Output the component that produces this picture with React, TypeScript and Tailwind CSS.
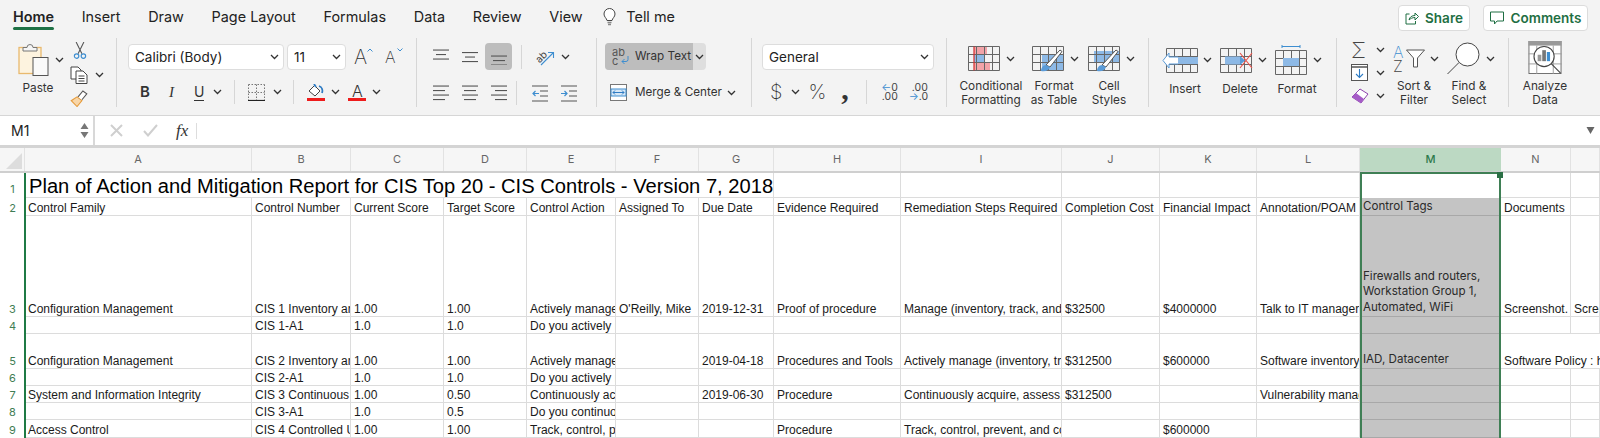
import React from "react";

// chevron used by every ribbon dropdown
const Chev = ({ className = "" }: { className?: string }) => (
  <svg width="9" height="6" viewBox="0 0 9 6" className={"shrink-0 " + className}>
    <path d="M1 1l3.5 3.5L8 1" fill="none" stroke="#333" strokeWidth="1.3" />
  </svg>
);

const Label = ({ children, className = "" }: { children: React.ReactNode; className?: string }) => (
  <div className={"text-center text-[11.8px] leading-[13.5px] text-[#333] " + className}>{children}</div>
);

const tabs = ["Insert", "Draw", "Page Layout", "Formulas", "Data", "Review", "View"];

const TopBar = () => (
  <div className="flex h-[38px] items-start justify-between">
    <div className="flex items-center gap-[27.75px] pl-[13px] pt-[7px] text-[14.4px] leading-[20px] text-[#222]">
      <div className="relative font-semibold">
        Home
        <div className="absolute left-0 right-0 top-[20px] h-[3px] rounded-sm bg-[#1e7145]"></div>
      </div>
      {tabs.map((t) => (
        <div key={t}>{t}</div>
      ))}
      <div className="-ml-[7px] flex items-center gap-[10px]">
        <svg width="13" height="18" viewBox="0 0 13 18">
          <path d="M4 12.5C3.5 10 1 9 1 6a5.5 5.5 0 0 1 11 0c0 3-2.5 4-3 6.5z" fill="#fff" stroke="#444" strokeWidth="1" />
          <path d="M4.5 14.5h4M5 16.5h3" stroke="#888" strokeWidth="1.4" />
        </svg>
        <span>Tell me</span>
      </div>
    </div>
    <div className="flex gap-[13px] pr-[12px] pt-[5px] text-[13.5px] font-semibold text-[#1f6f43]">
      <div className="flex h-[26px] w-[72px] items-center justify-center gap-[6px] rounded-[4px] border border-[#dcdcdc] bg-white">
        <svg width="14" height="14" viewBox="0 0 14 14" fill="none" stroke="#1f6f43" strokeWidth="1">
          <path d="M4.5 3H1v10h9.5v-3" />
          <path d="M4 9c.5-3 3-4.5 6-4.5V2l3.5 3.5L10 9V6.5C7.5 6.5 5.5 7.5 4 9z" />
        </svg>
        Share
      </div>
      <div className="flex h-[26px] w-[105px] items-center justify-center gap-[7px] rounded-[4px] border border-[#dcdcdc] bg-white">
        <svg width="14" height="14" viewBox="0 0 14 14" fill="none" stroke="#1f6f43" strokeWidth="1">
          <path d="M.5 1h13v9H7l-2.5 3v-3H.5z" />
        </svg>
        Comments
      </div>
    </div>
  </div>
);

const PasteIcon = () => (
  <svg width="31" height="33" viewBox="0 0 31 33" className="shrink-0">
    <rect x="1" y="4.5" width="22" height="26" fill="#fdf3df" stroke="#e9b96e" strokeWidth="1.3" />
    <path d="M5 8V4.5h4a3 3 0 0 1 6 0h4V8z" fill="#f5f5f5" stroke="#777" strokeWidth="1" />
    <rect x="15" y="14.5" width="15" height="18" fill="#fafafa" stroke="#555" strokeWidth="1" />
  </svg>
);

const ClipTools = () => (
  <div className="ml-[4px] flex w-[40px] flex-col pt-[4px]">
    <svg width="14" height="18" viewBox="0 0 14 18" className="ml-[3px]">
      <path d="M3 0l6 12M11 0L5 12" stroke="#555" strokeWidth="1.1" />
      <circle cx="3.5" cy="14.5" r="2.3" fill="none" stroke="#3e8ed0" strokeWidth="1.2" />
      <circle cx="10.5" cy="14.5" r="2.3" fill="none" stroke="#3e8ed0" strokeWidth="1.2" />
    </svg>
    <div className="mt-[6px] flex items-center">
      <svg width="19" height="18" viewBox="0 0 19 18" fill="#fff" stroke="#444" strokeWidth="1">
        <path d="M1 1h7l3 3v9H1z" />
        <path d="M6 5h7l4 4v8.5H6zM8.5 10h6M8.5 12.5h6M8.5 15h6" />
      </svg>
      <Chev className="ml-[6px]" />
    </div>
    <svg width="19" height="18" viewBox="0 0 19 18" className="mt-[6px]">
      <path d="M1 11l6 6 5-6-5-4z" fill="#f8d6a8" stroke="#e59b3c" strokeWidth="1.1" />
      <path d="M8 7l5-6 4 3-5 6" fill="#fff" stroke="#555" strokeWidth="1.1" />
    </svg>
  </div>
);

const Sep = () => <div className="h-[24px] w-px shrink-0 bg-[#d6d6d6]"></div>;

const SelectBox = ({ text, className }: { text: string; className: string }) => (
  <div className={"flex h-[26px] items-center justify-between rounded-[4px] border border-[#dddddd] bg-white pl-[6px] pr-[4px] text-[13.5px] text-[#222] " + className}>
    <span>{text}</span>
    <Chev />
  </div>
);

const FontGroup = () => (
  <div className="flex h-[69px] w-[300px] shrink-0 flex-col border-r border-[#d6d6d6] pl-[11px] pt-[6px]">
    <div className="flex items-center">
      <SelectBox text="Calibri (Body)" className="w-[156px]" />
      <SelectBox text="11" className="ml-[3px] w-[59px]" />
      <div className="relative ml-[8px] w-[19px] text-[20px] font-extralight leading-[24px] text-[#333]">
        A
        <svg width="6" height="4" viewBox="0 0 6 4" className="absolute right-0 top-[3px]">
          <path d="M.5 3.5L3 1l2.5 2.5" fill="none" stroke="#3e8ed0" />
        </svg>
      </div>
      <div className="relative ml-[12px] w-[17px] text-[16px] font-extralight leading-[24px] text-[#333]">
        A
        <svg width="6" height="4" viewBox="0 0 6 4" className="absolute -right-[1px] top-[3px]">
          <path d="M.5.5L3 3 5.5.5" fill="none" stroke="#3e8ed0" />
        </svg>
      </div>
    </div>
    <div className="mt-[10px] flex items-center text-[#333]">
      <span className="ml-[12px] text-[15px] font-semibold leading-[20px]">B</span>
      <span className="ml-[19px] font-['Liberation_Serif',serif] text-[15px] italic leading-[20px]">I</span>
      <span className="ml-[20px] border-b border-[#333] text-[14px] leading-[16px]">U</span>
      <Chev className="ml-[9px]" />
      <div className="ml-[12px]"><Sep /></div>
      <svg width="17" height="17" viewBox="0 0 17 17" className="ml-[13px]">
        <path d="M.5.5h16M.5 8.5h16M.5.5v16M8.5.5v16M16.5.5v16" stroke="#777" strokeDasharray="1.5 1.5" fill="none" />
        <path d="M0 16.5h17" stroke="#222" strokeWidth="1.2" />
      </svg>
      <Chev className="ml-[8px]" />
      <div className="ml-[11px]"><Sep /></div>
      <div className="ml-[13px] flex w-[18px] flex-col items-center">
        <svg width="16" height="13" viewBox="0 0 16 13">
          <path d="M1 7l5.5-5.5L12 7l-5 5z" fill="#fff" stroke="#444" strokeWidth="1" />
          <path d="M6 0l2 3M11 2c3 1 4 4 3 7" fill="none" stroke="#2f7cc4" strokeWidth="1.8" />
        </svg>
        <div className="mt-[1px] h-[3px] w-[18px] bg-[#ee1c1c]"></div>
      </div>
      <Chev className="ml-[6px]" />
      <div className="ml-[8px] flex w-[18px] flex-col items-center">
        <span className="h-[13px] text-[16px] font-light leading-[14px]">A</span>
        <div className="mt-[1px] h-[3px] w-[18px] bg-[#ee1c1c]"></div>
      </div>
      <Chev className="ml-[6px]" />
    </div>
  </div>
);

// stacked alignment bars, 4.5px apart like the ribbon icons
const Lines = ({ widths, offset = 0, side = "center" }: { widths: number[]; offset?: number; side?: string }) => (
  <svg width="16" height="16" viewBox="0 0 16 16" className="shrink-0">
    {widths.map((w, i) => (
      <rect
        key={i}
        x={side === "left" ? 0 : side === "right" ? 16 - w : (16 - w) / 2}
        y={i * 4.5 + 0.5 + offset}
        width={w}
        height="1.1"
        fill="#555"
      />
    ))}
  </svg>
);

const AlignGroup = () => (
  <div className="flex h-[69px] w-[180px] shrink-0 flex-col border-r border-[#d6d6d6] pl-[16px] pt-[5px]">
    <div className="flex h-[27px] items-center">
      <Lines widths={[16, 10, 16]} />
      <div className="ml-[13px]"><Lines widths={[16, 10, 16]} offset={2.5} /></div>
      <div className="ml-[7px] flex h-[27px] w-[27px] items-center justify-center rounded-[4px] bg-[#bdbdbd]">
        <Lines widths={[16, 12, 16]} offset={6} />
      </div>
      <div className="ml-[9px]"><Sep /></div>
      <svg width="20" height="20" viewBox="0 0 20 20" className="ml-[13px]">
        <text x="0" y="11" fontSize="10" fill="#444" transform="rotate(-45 6 8) translate(-1 2)" fontFamily="Inter">ab</text>
        <path d="M6 18L18 6M13 5.5h5.5V11" stroke="#3e8ed0" strokeWidth="1.1" fill="none" />
      </svg>
      <Chev className="ml-[6px]" />
    </div>
    <div className="mt-[11px] flex items-center">
      <Lines widths={[16, 12, 16, 12]} side="left" />
      <div className="ml-[13px]"><Lines widths={[16, 12, 16, 12]} /></div>
      <div className="ml-[13px]"><Lines widths={[16, 12, 16, 12]} side="right" /></div>
      <div className="ml-[9px]"><Sep /></div>
      <svg width="17" height="17" viewBox="0 0 17 17" className="ml-[15px]">
        <path d="M0 1h16M8 6h8M8 11h8M0 16h16" stroke="#555" strokeWidth="1.1" />
        <path d="M7 8.5H1M3.5 6L1 8.5 3.5 11" stroke="#3e8ed0" fill="none" strokeWidth="1.2" />
      </svg>
      <svg width="17" height="17" viewBox="0 0 17 17" className="ml-[12px]">
        <path d="M0 1h16M8 6h8M8 11h8M0 16h16" stroke="#555" strokeWidth="1.1" />
        <path d="M0 8.5h6M3.5 6L6 8.5 3.5 11" stroke="#3e8ed0" fill="none" strokeWidth="1.2" />
      </svg>
    </div>
  </div>
);

const WrapGroup = () => (
  <div className="flex h-[69px] w-[155px] shrink-0 flex-col border-r border-[#d6d6d6] pl-[8px] pt-[5px] text-[11.7px] text-[#333]">
    <div className="flex h-[27px] w-[101px] overflow-hidden rounded-[4px] bg-[#dedede]">
      <div className="relative flex w-[88px] items-center whitespace-nowrap bg-[#bdbdbd] pl-[7px]">
        <span className="w-[17px] text-[11px] leading-[9px] text-[#555]">ab<br />c</span>
        <svg width="8" height="8" viewBox="0 0 8 8" className="-ml-[8px] mt-[6px]">
          <path d="M7 0v3.5a2 2 0 0 1-2 2H1M3.5 3L1 5.5 3.5 8" fill="none" stroke="#3e8ed0" />
        </svg>
        <span className="ml-[6px]">Wrap Text</span>
      </div>
      <Chev className="ml-[2px] self-center" />
    </div>
    <div className="mt-[14px] flex items-center pl-[5px]">
      <svg width="17" height="17" viewBox="0 0 17 17">
        <rect x=".5" y=".5" width="16" height="16" fill="#fff" stroke="#777" />
        <rect x="1" y="5" width="15" height="7" fill="#d6e7f6" stroke="#3e8ed0" />
        <path d="M3 8.5h11M5 6.5l-2 2 2 2M12 6.5l2 2-2 2" stroke="#2f7cc4" fill="none" />
      </svg>
      <span className="ml-[8px] whitespace-nowrap">Merge &amp; Center</span>
      <Chev className="ml-[5px]" />
    </div>
  </div>
);

const NumberGroup = () => (
  <div className="flex h-[69px] w-[195px] shrink-0 flex-col border-r border-[#d6d6d6] pl-[10px] pt-[6px] text-[#333]">
    <SelectBox text="General" className="w-[172px]" />
    <div className="mt-[10px] flex items-center">
      <span className="ml-[8px] text-[20px] font-extralight leading-[24px]">$</span>
      <Chev className="ml-[9px]" />
      <span className="ml-[8px] text-[20px] font-extralight leading-[24px]">%</span>
      <span className="ml-[15px] h-[24px] font-['Liberation_Serif',serif] text-[30px] font-bold leading-[18px]">,</span>
      <div className="ml-[17px]"><Sep /></div>
      <div className="ml-[12px] w-[19px] text-right text-[10.5px] leading-[9px] text-[#444]">
        <span className="text-[#3e8ed0]">←</span>0<br />.00
      </div>
      <div className="ml-[11px] w-[19px] text-right text-[10.5px] leading-[9px] text-[#444]">
        .00<br /><span className="text-[#3e8ed0]">→</span>.0
      </div>
    </div>
  </div>
);

const Brush = () => (
  <g>
    <path d="M14 19L28 4l2 1.5-12 15.5z" fill="#fff" stroke="#555" strokeWidth="1" />
    <path d="M9 25c0-3 2-6 5-6l4 2c-1 3-4 5-9 4z" fill="#5a9bd8" />
  </g>
);

const GridLines = () => (
  <path d="M.5.5h31v24H.5zM.5 8.5h31M.5 16.5h31M8.5.5v24M16.5.5v24M24.5.5v24" fill="none" stroke="#666" strokeWidth="1" />
);

// icon sits where iconClass puts it, the caption is centred under the whole column
const BigButton = ({ icon, lines, w, iconClass }: { icon: React.ReactNode; lines: string[]; w: string; iconClass: string }) => (
  <div className={"flex shrink-0 flex-col items-center " + w}>
    <div className={"mb-[1px] flex h-[44px] w-full items-center " + iconClass}>{icon}</div>
    <Label className="whitespace-nowrap">
      {lines.map((l) => (
        <div key={l}>{l}</div>
      ))}
    </Label>
  </div>
);

const StylesGroup = () => (
  <div className="flex h-[69px] w-[202px] shrink-0 border-r border-[#d6d6d6] pl-[12px]">
    <BigButton
      w="w-[64px]"
      iconClass="pl-[9px]"
      lines={["Conditional", "Formatting"]}
      icon={
        <>
          <svg width="32" height="25" viewBox="0 0 32 25" className="shrink-0">
            <rect x="6" y="0" width="13" height="8" fill="#f2a3a8" />
            <rect x="6" y="8" width="10" height="8" fill="#8db9e6" />
            <rect x="6" y="17" width="16" height="8" fill="#f2a3a8" />
            <GridLines />
            <path d="M6 .5v24" stroke="#d52b2b" strokeWidth="1.2" />
          </svg>
          <Chev className="ml-[6px]" />
        </>
      }
    />
    <BigButton
      w="w-[62px]"
      iconClass="pl-[9px]"
      lines={["Format", "as Table"]}
      icon={
        <>
          <svg width="34" height="27" viewBox="0 0 34 27" className="mt-[2px] shrink-0">
            <rect x="10" y="8" width="21" height="16" fill="#8db9e6" />
            <GridLines />
            <Brush />
          </svg>
          <Chev className="ml-[4px]" />
        </>
      }
    />
    <BigButton
      w="w-[48px]"
      iconClass="pl-[3px]"
      lines={["Cell", "Styles"]}
      icon={
        <>
          <svg width="34" height="27" viewBox="0 0 34 27" className="mt-[2px] shrink-0">
            <rect x="6" y="5" width="25" height="12" fill="#8db9e6" />
            <GridLines />
            <Brush />
          </svg>
          <Chev className="ml-[4px]" />
        </>
      }
    />
  </div>
);

const CellsGroup = () => (
  <div className="flex h-[69px] w-[188px] shrink-0 border-r border-[#d6d6d6] pl-[6px]">
    <BigButton
      w="w-[60px]"
      iconClass="pl-[7px]"
      lines={["Insert"]}
      icon={
        <>
          <svg width="38" height="25" viewBox="0 0 38 25" className="shrink-0">
            <g transform="translate(4 0)"><GridLines /></g>
            <rect x="12" y="9" width="24" height="7" fill="#8db9e6" />
            <path d="M16 9H7V5L1 12.5 7 20v-4h9" fill="#fff" stroke="#5a9bd8" strokeWidth="1" />
          </svg>
          <Chev className="ml-[3px]" />
        </>
      }
    />
    <BigButton
      w="w-[50px]"
      iconClass="pl-[5px]"
      lines={["Delete"]}
      icon={
        <>
          <svg width="33" height="25" viewBox="0 0 33 25" className="shrink-0">
            <GridLines />
            <rect x="5" y="8.5" width="15" height="8" fill="#8db9e6" />
            <path d="M20 8l5 4.5-5 4.5z" fill="#5a9bd8" />
            <path d="M20 5l12 15M32 5L20 20" stroke="#e8564f" strokeWidth="1.2" />
          </svg>
          <Chev className="ml-[5px]" />
        </>
      }
    />
    <BigButton
      w="w-[64px]"
      iconClass="pl-[10px]"
      lines={["Format"]}
      icon={
        <>
          <svg width="32" height="30" viewBox="0 0 32 30" className="shrink-0">
            <path d="M7 1.5h18M7 0v3M25 0v3" stroke="#3e8ed0" fill="none" />
            <g transform="translate(0 5)"><GridLines /></g>
            <rect x="8" y="13" width="16" height="8" fill="#8db9e6" />
          </svg>
          <Chev className="ml-[6px]" />
        </>
      }
    />
  </div>
);

const EditGroup = () => (
  <div className="flex h-[69px] w-[172px] shrink-0 border-r border-[#d6d6d6] pl-[14px]">
    <div className="flex w-[42px] flex-col text-[#444]">
      <div className="flex h-[24px] items-center">
        <span className="w-[19px] text-[22px] font-extralight leading-[22px]">Σ</span>
        <Chev className="ml-[6px]" />
      </div>
      <div className="flex h-[24px] items-center">
        <svg width="18" height="17" viewBox="0 0 18 17">
          <rect x=".5" y=".5" width="16" height="16" fill="#fff" stroke="#555" />
          <path d="M0 3h17" stroke="#555" strokeWidth="1.5" />
          <path d="M8.5 5v8M5 10l3.5 3.5L12 10" stroke="#2f7cc4" fill="none" strokeWidth="1.1" />
        </svg>
        <Chev className="ml-[7px]" />
      </div>
      <div className="flex h-[24px] items-center">
        <svg width="18" height="17" viewBox="0 0 18 17">
          <path d="M1 10l8-8 8 5-7 9z" fill="#fff" stroke="#8e44ad" />
          <path d="M1 10l4-4 8 6-3 4z" fill="#a55bc7" />
        </svg>
        <Chev className="ml-[7px]" />
      </div>
    </div>
    <BigButton
      w="w-[42px]"
      iconClass=""
      lines={["Sort &", "Filter"]}
      icon={
        <>
          <div className="flex w-[13px] shrink-0 flex-col text-[16px] font-extralight leading-[14px]">
            <span className="text-[#3e8ed0]">A</span>
            <span className="text-[#444]">Z</span>
          </div>
          <svg width="19" height="19" viewBox="0 0 19 19" className="shrink-0">
            <path d="M.5 1h18l-7 8v9h-4V9z" fill="#fff" stroke="#555" />
          </svg>
          <Chev className="ml-[5px]" />
        </>
      }
    />
    <BigButton
      w="w-[68px]"
      iconClass="pl-[12px]"
      lines={["Find &", "Select"]}
      icon={
        <>
          <svg width="33" height="33" viewBox="0 0 33 33" className="shrink-0">
            <circle cx="20.5" cy="12.5" r="11.5" fill="#fff" stroke="#444" />
            <path d="M12 20.5L.5 32" stroke="#444" />
          </svg>
          <Chev className="ml-[6px]" />
        </>
      }
    />
  </div>
);

const AnalyzeGroup = () => (
  <div className="flex h-[69px] w-[72px] shrink-0 flex-col items-center">
    <svg width="36" height="36" viewBox="0 0 36 36" className="mt-[3px]">
      <rect x=".5" y=".5" width="35" height="35" fill="#fff" stroke="#666" />
      <rect x="0" y="0" width="36" height="5" fill="#999" />
      <path d="M0 14h36M0 25h36M9 5v31M27 5v31" stroke="#999" strokeWidth="1" />
      <circle cx="17" cy="17" r="11" fill="#fff" stroke="#444" strokeWidth="1.2" />
      <rect x="10" y="15" width="4" height="7" fill="#999" />
      <rect x="15" y="10" width="4" height="12" fill="#777" />
      <rect x="20" y="12" width="3.5" height="10" fill="#3e8ed0" />
      <path d="M25 25l10 10" stroke="#444" strokeWidth="1.2" />
    </svg>
    <Label className="mt-[6px]">
      <div>Analyze</div>
      <div>Data</div>
    </Label>
  </div>
);

const Ribbon = () => (
  <div className="flex h-[78px] border-b border-[#d6d6d6]">
    <div className="flex h-[69px] w-[117px] shrink-0 border-r border-[#d6d6d6] pl-[18px]">
      <div className="flex w-[48px] shrink-0 flex-col">
        <div className="mt-[5px] flex items-center">
          <PasteIcon />
          <Chev className="ml-[6px]" />
        </div>
        <div className="mt-[5px] w-[40px] text-center text-[11.8px] leading-[14px] text-[#333]">Paste</div>
      </div>
      <ClipTools />
    </div>
    <FontGroup />
    <AlignGroup />
    <WrapGroup />
    <NumberGroup />
    <StylesGroup />
    <CellsGroup />
    <EditGroup />
    <AnalyzeGroup />
  </div>
);

const FormulaBar = () => (
  <div className="flex h-[32px] items-stretch border-b-[3px] border-[#d4d4d4] bg-white">
    <div className="flex w-[95px] items-center justify-between border-r-2 border-[#d8d8d8] pl-[11px] pr-[4px] text-[14px] text-[#222]">
      <span>M1</span>
      <svg width="9" height="17" viewBox="0 0 9 17">
        <path d="M4.5 1L8.5 7H.5zM4.5 16L.5 10h8z" fill="#777" />
      </svg>
    </div>
    <div className="flex flex-1 items-center pl-[15px]">
      <svg width="13" height="13" viewBox="0 0 13 13">
        <path d="M1 1l11 11M12 1L1 12" stroke="#cfcfcf" strokeWidth="2" />
      </svg>
      <svg width="15" height="13" viewBox="0 0 15 13" className="ml-[20px]">
        <path d="M1 7l4 4.5L14 1" fill="none" stroke="#cfcfcf" strokeWidth="2" />
      </svg>
      <span className="ml-[18px] font-['Liberation_Serif',serif] text-[17px] italic text-[#333]">fx</span>
      <div className="ml-[8px] h-[16px] w-px bg-[#dddddd]"></div>
      <div className="flex-1"></div>
      <svg width="9" height="7" viewBox="0 0 9 7" className="mr-[5px]">
        <path d="M.5 0h8L4.5 7z" fill="#666" />
      </svg>
    </div>
  </div>
);

const columns = ["A", "B", "C", "D", "E", "F", "G", "H", "I", "J", "K", "L", "M", "N", ""];
const cols = "grid grid-cols-[25px_227px_99px_93px_83px_89px_83px_75px_127px_161px_98px_97px_103px_141px_70px_29px]";
const cell = "flex min-w-0 items-end overflow-hidden whitespace-nowrap border-b border-r border-[#dcdcdc] pl-[3px] text-[12px] leading-[14px] text-[#1a1a1a]";

type Row = { n: number; h: string; cells: string[]; tag?: string };

const rows: Row[] = [
  {
    n: 2,
    h: "h-[18px]",
    tag: "Control Tags",
    cells: ["Control Family", "Control Number", "Current Score", "Target Score", "Control Action", "Assigned To", "Due Date", "Evidence Required", "Remediation Steps Required", "Completion Cost", "Financial Impact", "Annotation/POAM", "", "Documents", ""],
  },
  {
    n: 3,
    h: "h-[101px]",
    tag: "Firewalls and routers, Workstation Group 1, Automated, WiFi",
    cells: ["Configuration Management", "CIS 1 Inventory and Control", "1.00", "1.00", "Actively manage all hardware", "O'Reilly, Mike", "2019-12-31", "Proof of procedure", "Manage (inventory, track, and correct)", "$32500", "$4000000", "Talk to IT manager about it", "", "Screenshot.", "Screenshot"],
  },
  { n: 4, h: "h-[17px]", cells: ["", "CIS 1-A1", "1.0", "1.0", "Do you actively manage", "", "", "", "", "", "", "", "", "", ""] },
  {
    n: 5,
    h: "h-[35px]",
    tag: "IAD, Datacenter",
    cells: ["Configuration Management", "CIS 2 Inventory and Control", "1.00", "1.00", "Actively manage all software", "", "2019-04-18", "Procedures and Tools", "Actively manage (inventory, track)", "$312500", "$600000", "Software inventory tool", "", "Software Policy : https"],
  },
  { n: 6, h: "h-[17px]", cells: ["", "CIS 2-A1", "1.0", "1.0", "Do you actively manage", "", "", "", "", "", "", "", "", "", ""] },
  { n: 7, h: "h-[17px]", cells: ["System and Information Integrity", "CIS 3 Continuous Vulnerability", "1.00", "0.50", "Continuously acquire", "", "2019-06-30", "Procedure", "Continuously acquire, assess, and", "$312500", "", "Vulnerability management", "", "", ""] },
  { n: 8, h: "h-[17px]", cells: ["", "CIS 3-A1", "1.0", "0.5", "Do you continuously", "", "", "", "", "", "", "", "", "", ""] },
  { n: 9, h: "h-[18px]", cells: ["Access Control", "CIS 4 Controlled Use", "1.00", "1.00", "Track, control, prevent", "", "", "Procedure", "Track, control, prevent, and correct", "", "$600000", "", "", "", ""] },
];

const Sheet = () => (
  <div className="relative flex-1 overflow-hidden bg-white font-['Liberation_Sans',sans-serif]">
    {/* column letters */}
    <div className={cols + " h-[25px] border-b-2 border-[#cfcfcf] bg-[#f6f6f6] font-['Inter',sans-serif] text-[11px] text-[#666]"}>
      <div className="flex items-end border-r border-[#e2e2e2] pb-[2px] pl-[6px]">
        <div className="h-0 w-0 border-b-[16px] border-l-[16px] border-b-[#dddddd] border-l-transparent"></div>
      </div>
      {columns.map((c, i) =>
        c === "M" ? (
          <div key={c} className="flex items-center justify-center bg-[#bcd9c3] font-medium text-[#2e7a4b]">
            {c}
          </div>
        ) : (
          <div key={i} className="flex items-center justify-center border-r border-[#e2e2e2]">
            {c}
          </div>
        )
      )}
    </div>

    {/* row 1 holds the title, it runs over A to G */}
    <div className={cols + " h-[25px]"}>
      <div className="flex items-end justify-center pb-[1px] font-['Inter',sans-serif] text-[11px] text-[#3f7d54]">1</div>
      <div className="col-span-7 flex items-end whitespace-nowrap border-b border-r border-[#dcdcdc] pl-[4px] text-[20.15px] leading-[22px] text-black">
        Plan of Action and Mitigation Report for CIS Top 20 - CIS Controls - Version 7, 2018
      </div>
      {["H", "I", "J", "K", "L"].map((c) => (
        <div key={c} className="border-b border-r border-[#dcdcdc]"></div>
      ))}
      <div className="border-r border-[#dcdcdc]"></div>
      <div className="border-b border-r border-[#dcdcdc]"></div>
      <div className="border-b border-r border-[#dcdcdc]"></div>
    </div>

    {rows.map((r) => (
      <div key={r.n} className={cols + " " + r.h}>
        <div className="flex items-end justify-center font-['Inter',sans-serif] text-[11px] leading-[15px] text-[#3f7d54]">{r.n}</div>
        {r.cells.map((c, i) =>
          i === 12 ? (
            <div key={i} className="px-[2px]">
              <div className="flex h-full items-end whitespace-normal border-b border-[#a8a8a8] bg-[#c4c4c4] pb-[1px] pl-[1px] pr-[10px] font-['Inter',sans-serif] text-[11.6px] leading-[15.5px] text-[#2a2a2a]">
                {r.tag}
              </div>
            </div>
          ) : (
            <div key={i} className={cell + (i === 13 && r.n === 5 ? " col-span-2 border-r-0" : "")}>
              {c}
            </div>
          )
        )}
      </div>
    ))}

    {/* selection frame of column M and the left edge marker */}
    <div className="absolute bottom-0 left-[24px] top-[25px] w-[2px] bg-[#1f7a45]"></div>
    <div className="absolute bottom-[-3px] left-[1360px] top-[24px] w-[141px] border-x-[2px] border-t-[2px] border-[#3f7f55]"></div>
    <div className="absolute left-[1497px] top-[24px] h-[6px] w-[6px] bg-[#2b6f45]"></div>
  </div>
);

export default function App() {
  return (
    <div className="flex h-[438px] w-[1600px] flex-col overflow-hidden bg-[#f3f3f3] font-['Inter',sans-serif]">
      <TopBar />
      <Ribbon />
      <FormulaBar />
      <Sheet />
    </div>
  );
}
